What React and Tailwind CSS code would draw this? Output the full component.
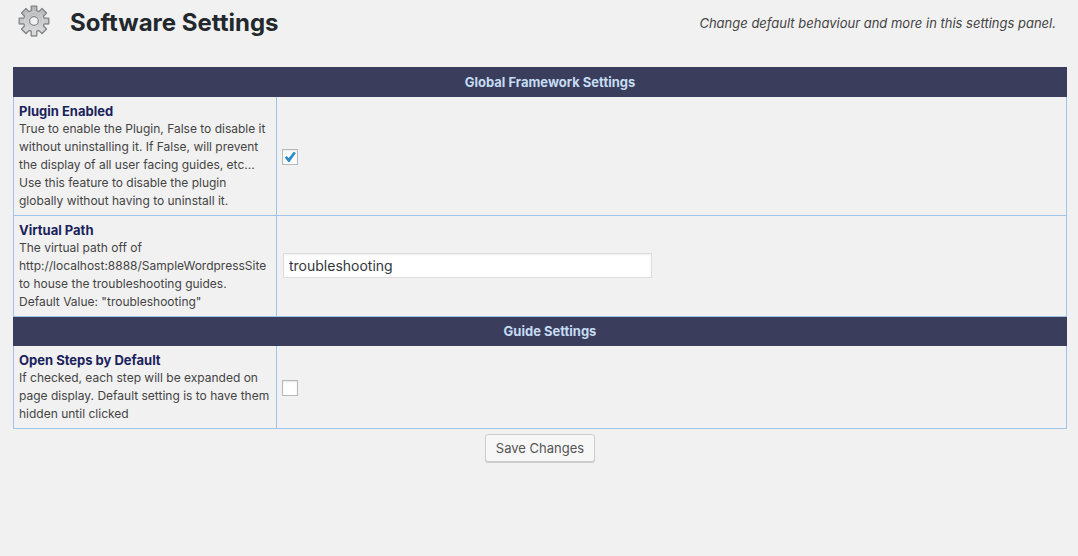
import { useState } from "react";

const GEAR_PATH =
  "M13.2 1.2 H18.8 V5.8 L20.8 6.6 L24 3.5 L28.5 8 L25.4 11.2 L26.2 13.2 H30.8 V18.8 H26.2 L25.4 20.8 L28.5 24 L24 28.5 L20.8 25.4 L18.8 26.2 V30.8 H13.2 V26.2 L11.2 25.4 L8 28.5 L3.5 24 L6.6 20.8 L5.8 18.8 H1.2 V13.2 H5.8 L6.6 11.2 L3.5 8 L8 3.5 L11.2 6.6 L13.2 5.8 Z";

function GearIcon() {
  return (
    <svg viewBox="0 0 32 32" className="size-8 shrink-0" aria-hidden="true">
      <defs>
        <linearGradient id="gear-fill" x1="0" y1="2" x2="0" y2="30" gradientUnits="userSpaceOnUse">
          <stop offset="0" stopColor="#b4b5b8" />
          <stop offset="1" stopColor="#dcdddf" />
        </linearGradient>
      </defs>
      <path d={GEAR_PATH} fill="#000" opacity="0.15" transform="translate(0 1)" />
      <path
        d={GEAR_PATH}
        fill="url(#gear-fill)"
        stroke="#838487"
        strokeWidth="1.3"
        strokeLinejoin="round"
      />
      <circle cx="16" cy="16" r="9.2" fill="none" stroke="#e6e6e8" strokeWidth="0.8" opacity="0.6" />
      <circle cx="16" cy="16" r="5.5" fill="#e6e6e8" />
      <circle cx="16" cy="16" r="4.4" fill="#f1f1f1" stroke="#838487" strokeWidth="1.3" />
    </svg>
  );
}

function SectionRow({ children }) {
  return (
    <tr>
      <th
        colSpan={2}
        scope="colgroup"
        className="border border-[#3a3d5c] bg-[#3a3d5c] py-[5px] pr-[5px] pl-[25px] text-center text-[13px] leading-[18px] font-bold text-[#c5dcf2]"
      >
        {children}
      </th>
    </tr>
  );
}

function SettingRow({ id, title, description, children }) {
  return (
    <tr>
      <td className="border border-[#a0c3e8] p-[5px] align-middle">
        <label htmlFor={id} className="block text-[13px] leading-[18px] font-bold text-[#1a235c]">
          {title}
        </label>
        <p id={`${id}-help`} className="text-xs leading-[18px] text-[#444444]">
          {description}
        </p>
      </td>
      <td className="border border-[#a0c3e8] p-[5px] align-middle">{children}</td>
    </tr>
  );
}

function CheckBox({ id, checked, onChange }) {
  return (
    <span className="grid pt-0.5">
      <input
        id={id}
        type="checkbox"
        checked={checked}
        onChange={(e) => onChange(e.target.checked)}
        aria-describedby={`${id}-help`}
        className="col-start-1 row-start-1 size-4 appearance-none border border-[#b4b9be] bg-white shadow-[inset_0_1px_2px_rgba(0,0,0,0.1)]"
      />
      {checked && (
        <svg viewBox="0 0 16 16" className="pointer-events-none col-start-1 row-start-1 size-4" aria-hidden="true">
          <path d="M2.8 8.4 L4.7 6.9 L6.8 9 L11.7 2.8 L13.9 3.9 L7.6 12.9 H6.2 Z" fill="#2e8bc9" />
        </svg>
      )}
    </span>
  );
}

export default function App() {
  const [enabled, setEnabled] = useState(true);
  const [path, setPath] = useState("troubleshooting");
  const [openSteps, setOpenSteps] = useState(false);

  return (
    <main className="min-h-screen bg-[#f1f1f1] pr-[11px] pl-[13px] font-['Inter',sans-serif] text-[#444444]">
      <header className="flex h-[67px] items-start justify-between pt-[5px] pr-[11px] pl-[5px]">
        <div className="flex items-start gap-5">
          <GearIcon />
          <h1 className="text-2xl leading-9 font-bold text-[#23282d]">Software Settings</h1>
        </div>
        <p className="text-[13px] leading-9 italic">Change default behaviour and more in this settings panel.</p>
      </header>
      <form onSubmit={(e) => e.preventDefault()}>
        <table className="w-full table-fixed border-collapse">
          <colgroup>
            <col className="w-[263px]" />
            <col />
          </colgroup>
          <tbody>
            <SectionRow>Global Framework Settings</SectionRow>
            <SettingRow
              id="plugin-enabled"
              title="Plugin Enabled"
              description="True to enable the Plugin, False to disable it without uninstalling it. If False, will prevent the display of all user facing guides, etc... Use this feature to disable the plugin globally without having to uninstall it."
            >
              <CheckBox id="plugin-enabled" checked={enabled} onChange={setEnabled} />
            </SettingRow>
            <SettingRow
              id="virtual-path"
              title="Virtual Path"
              description={
                <>
                  The virtual path off of http://localhost:8888/SampleWordpressSite to house the troubleshooting
                  guides.
                  <br />
                  Default Value: "troubleshooting"
                </>
              }
            >
              <input
                id="virtual-path"
                type="text"
                value={path}
                onChange={(e) => setPath(e.target.value)}
                aria-describedby="virtual-path-help"
                className="mx-px mb-px block h-[25px] w-[369px] max-w-full border border-[#dddddd] bg-white px-[5px] text-sm text-[#32373c] shadow-[inset_0_1px_2px_rgba(0,0,0,0.07)]"
              />
            </SettingRow>
            <SectionRow>Guide Settings</SectionRow>
            <SettingRow
              id="open-steps"
              title="Open Steps by Default"
              description="If checked, each step will be expanded on page display. Default setting is to have them hidden until clicked"
            >
              <CheckBox id="open-steps" checked={openSteps} onChange={setOpenSteps} />
            </SettingRow>
          </tbody>
        </table>
        <div className="flex justify-center pt-[5px]">
          <button
            type="submit"
            className="h-7 rounded-[3px] border border-[#cccccc] bg-[#f7f7f7] px-[10px] text-[13px] leading-[26px] text-[#555555] shadow-[0_1px_0_#cccccc]"
          >
            Save Changes
          </button>
        </div>
      </form>
    </main>
  );
}
